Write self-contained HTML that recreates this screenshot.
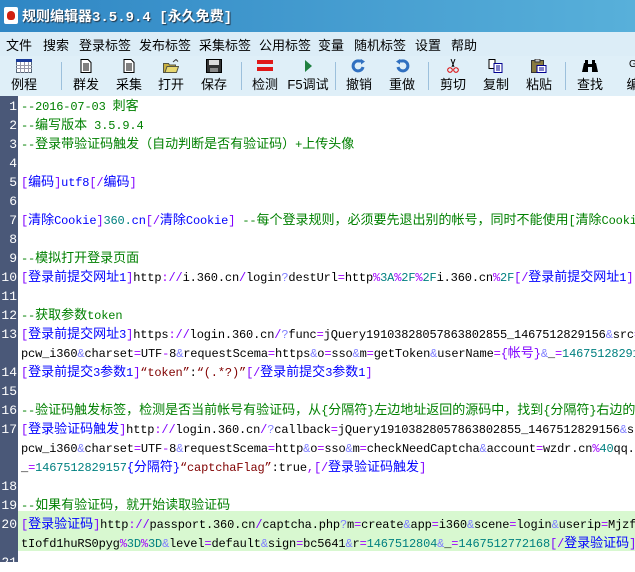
<!DOCTYPE html>
<html><head><meta charset="utf-8">
<style>
*{margin:0;padding:0;box-sizing:border-box}
body{width:635px;height:562px;overflow:hidden;background:#fff;font-family:"Liberation Sans","Noto Sans CJK SC",sans-serif;position:relative}
#title{position:absolute;left:0;top:0;width:635px;height:32px;background:linear-gradient(to right,#2f86c4,#58b0da);}
#title .ic{position:absolute;left:4px;top:7px;width:14px;height:17px;background:#fff;border-radius:2px}
#title .ic:after{content:"";position:absolute;left:3px;top:4px;width:8px;height:9px;background:#d02010;border-radius:4px 4px 3px 3px}
#title .tx{position:absolute;left:22px;top:6px;color:#fff;font-size:14px;font-weight:bold;text-shadow:1px 1px 1px #234;white-space:nowrap}
#title .tx span{font-family:"Liberation Mono",monospace;font-size:14px}
#menu{position:absolute;left:0;top:32px;width:635px;height:24px;background:#dcedf7}
#menu span{position:absolute;top:3px;font-size:13px;color:#000}
#tb{position:absolute;left:0;top:56px;width:635px;height:40px;background:#dfeff8}
.it{position:absolute;top:0;width:44px;text-align:center}
.it .lb{position:absolute;top:18px;left:0;width:100%;font-size:13px;color:#000;white-space:nowrap}
.it svg{position:absolute;top:3px;left:14px}
.sep{position:absolute;top:6px;width:1px;height:28px;background:#9cc0dc}
#gut{position:absolute;left:0;top:96px;width:18px;height:466px;background:#4a5878}
#ed{position:absolute;left:18px;top:96px;width:617px;height:466px;background:#fff;overflow:hidden}
.hl{position:absolute;left:0;top:415px;width:617px;height:40px;background:#d8f8d0}
.r{position:absolute;left:3px;height:19px;line-height:19px;white-space:nowrap;font-family:"Liberation Mono","Noto Sans CJK SC",monospace;font-size:12px;color:#000;letter-spacing:-0.15px;transform:translateY(2px)}
.r i{font-style:normal;font-family:"Noto Sans CJK SC",sans-serif;font-size:13px;line-height:12px;letter-spacing:0}
.n{position:absolute;left:0;width:17px;text-align:right;height:19px;line-height:19px;color:#fff;font-family:"Liberation Mono",monospace;font-size:13px;transform:translateY(1px)}
.c{color:#008000}.k{color:#8000ff}.t{color:#0000ff}.e{color:#a000ff}.a{color:#8080ff}.m{color:#008080}.s{color:#800000}
</style></head><body>
<div id="title"><div class="ic"></div><div class="tx">规则编辑器<span>3.5.9.4 [</span>永久免费<span>]</span></div></div>
<div id="menu">
<span style="left:6px">文件</span><span style="left:43px">搜索</span><span style="left:79px">登录标签</span><span style="left:139px">发布标签</span><span style="left:199px">采集标签</span><span style="left:259px">公用标签</span><span style="left:318px">变量</span><span style="left:354px">随机标签</span><span style="left:415px">设置</span><span style="left:451px">帮助</span>
</div>
<div id="tb">
<div class="it" style="left:2px"><svg width="16" height="14"><rect x="0.5" y="0.5" width="15" height="13" fill="#fff" stroke="#567"/><rect x="0" y="0" width="16" height="3" fill="#1a3a9a"/><path d="M0 6.5h16M0 9.5h16M4.5 3v11M8.5 3v11M12.5 3v11" stroke="#99a" /></svg><div class="lb">例程</div></div>
<svg style="position:absolute;left:46px;top:72px" width="7" height="4"><path d="M0 0h7L3.5 4z" fill="#000"/></svg>
<div class="sep" style="left:61px"></div>
<div class="it" style="left:64px"><svg width="16" height="14"><path d="M3 .5h7l3 3v10H3z" fill="#fff" stroke="#000"/><path d="M5 5h6M5 7h6M5 9h6M5 11h6" stroke="#000"/></svg><div class="lb">群发</div></div>
<div class="it" style="left:107px"><svg width="16" height="14"><path d="M3 .5h7l3 3v10H3z" fill="#fff" stroke="#000"/><path d="M5 5h6M5 7h6M5 9h6M5 11h6" stroke="#000"/></svg><div class="lb">采集</div></div>
<div class="it" style="left:149px"><svg width="16" height="14"><path d="M0.5 4.5h5l1 1.5h6v7.5H.5z" fill="#c8b040" stroke="#554"/><path d="M2 13.5l2-6h11.5l-2 6z" fill="#e8d870" stroke="#554"/><path d="M10 3l3-2.5 2 2" fill="none" stroke="#333"/></svg><div class="lb">打开</div></div>
<div class="it" style="left:192px"><svg width="16" height="14"><rect x=".5" y=".5" width="15" height="13" fill="#333" stroke="#000"/><rect x="3" y="1" width="10" height="5" fill="#ddd"/><rect x="4" y="9" width="8" height="4" fill="#888"/></svg><div class="lb">保存</div></div>
<div class="sep" style="left:241px"></div>
<div class="it" style="left:243px"><svg width="16" height="14"><rect x="0" y="1" width="16" height="4" fill="#e01818"/><rect x="0" y="8" width="16" height="4" fill="#e01818"/></svg><div class="lb">检测</div></div>
<div class="it" style="left:286px"><svg width="16" height="14"><path d="M5 1l7 6-7 6z" fill="#208040"/></svg><div class="lb">F5调试</div></div>
<div class="sep" style="left:335px"></div>
<div class="it" style="left:337px"><svg width="16" height="14"><path d="M12 8a5 5 0 1 1-4-6h3" fill="none" stroke="#3070c0" stroke-width="3"/><path d="M10 0l4 2.5-4 3z" fill="#3070c0"/></svg><div class="lb">撤销</div></div>
<div class="it" style="left:380px"><svg width="16" height="14"><path d="M4 8a5 5 0 1 0 4-6H5" fill="none" stroke="#3070c0" stroke-width="3"/><path d="M6 0L2 2.5l4 3z" fill="#3070c0"/></svg><div class="lb">重做</div></div>
<div class="sep" style="left:428px"></div>
<div class="it" style="left:431px"><svg width="16" height="14"><path d="M6 0l3 8M10 0L7 8" stroke="#000"/><circle cx="5" cy="11" r="2.3" fill="none" stroke="#d00"/><circle cx="11" cy="11" r="2.3" fill="none" stroke="#d00"/></svg><div class="lb">剪切</div></div>
<div class="it" style="left:474px"><svg width="16" height="14"><path d="M1 .5h6v9H1z" fill="#fff" stroke="#000"/><path d="M6 4.5h8v9H6z" fill="#fff" stroke="#000090"/><path d="M8 7h4M8 9h4M8 11h4" stroke="#000090"/></svg><div class="lb">复制</div></div>
<div class="it" style="left:517px"><svg width="16" height="14"><rect x=".5" y="1.5" width="12" height="12" fill="#887a40" stroke="#333"/><rect x="4" y="0" width="5" height="3" fill="#ccc" stroke="#333"/><path d="M6 6.5h9v7H6z" fill="#fff" stroke="#000090"/><path d="M8 9h5M8 11h5" stroke="#000090"/></svg><div class="lb">粘贴</div></div>
<div class="sep" style="left:565px"></div>
<div class="it" style="left:568px"><svg width="16" height="14"><path d="M2 4h4v9H0zM10 4h4l2 9h-6z" fill="#000"/><rect x="6" y="5" width="4" height="3" fill="#000"/><rect x="3" y="1" width="3" height="3" fill="#000"/><rect x="10" y="1" width="3" height="3" fill="#000"/></svg><div class="lb">查找</div></div>
<div class="it" style="left:611px"><div style="position:absolute;top:3px;left:18px;font-size:10px">G</div><div class="lb">编</div></div>
</div>
<div id="gut">
<div class="n" style="top:0">1</div><div class="n" style="top:19px">2</div><div class="n" style="top:38px">3</div><div class="n" style="top:57px">4</div><div class="n" style="top:76px">5</div><div class="n" style="top:95px">6</div><div class="n" style="top:114px">7</div><div class="n" style="top:133px">8</div><div class="n" style="top:152px">9</div><div class="n" style="top:171px">10</div><div class="n" style="top:190px">11</div><div class="n" style="top:209px">12</div><div class="n" style="top:228px">13</div><div class="n" style="top:266px">14</div><div class="n" style="top:285px">15</div><div class="n" style="top:304px">16</div><div class="n" style="top:323px">17</div><div class="n" style="top:380px">18</div><div class="n" style="top:399px">19</div><div class="n" style="top:418px">20</div><div class="n" style="top:456px">21</div>
</div>
<div id="ed">
<div class="hl"></div>
<div class="r c" style="top:0">--2016-07-03 <i>刺客</i></div>
<div class="r c" style="top:19px">--<i>编写版本</i> 3.5.9.4</div>
<div class="r c" style="top:38px">--<i>登录带验证码触发（自动判断是否有验证码）</i>+<i>上传头像</i></div>
<div class="r" style="top:76px"><span class="k">[</span><span class="t"><i>编码</i></span><span class="k">]</span><span class="t">utf8</span><span class="k">[/</span><span class="t"><i>编码</i></span><span class="k">]</span></div>
<div class="r" style="top:114px"><span class="k">[</span><span class="t"><i>清除</i>Cookie</span><span class="k">]</span><span class="m">360.</span><span class="t">cn</span><span class="k">[/</span><span class="t"><i>清除</i>Cookie</span><span class="k">]</span> <span class="c">--<i>每个登录规则，必须要先退出别的帐号，同时不能使用</i>[<i>清除</i>Cookie</span></div>
<div class="r c" style="top:152px">--<i>模拟打开登录页面</i></div>
<div class="r" style="top:171px"><span class="k">[</span><span class="t"><i>登录前提交网址</i>1</span><span class="k">]</span>http<span class="e">:</span><span class="k">//</span>i.360.cn<span class="k">/</span>login<span class="a">?</span>destUrl<span class="e">=</span>http<span class="m"><span class="e">%</span>3A<span class="e">%</span>2F<span class="e">%</span>2F</span>i.360.cn<span class="m"><span class="e">%</span>2F</span><span class="k">[/</span><span class="t"><i>登录前提交网址</i>1</span><span class="k">]</span></div>
<div class="r c" style="top:209px">--<i>获取参数</i>token</div>
<div class="r" style="top:228px"><span class="k">[</span><span class="t"><i>登录前提交网址</i>3</span><span class="k">]</span>https<span class="e">:</span><span class="k">//</span>login.360.cn<span class="k">/</span><span class="a">?</span>func<span class="e">=</span>jQuery19103828057863802855_1467512829156<span class="a">&amp;</span>src<span class="e">=</span></div>
<div class="r" style="top:247px">pcw_i360<span class="a">&amp;</span>charset<span class="e">=</span>UTF<span class="e">-</span>8<span class="a">&amp;</span>requestScema<span class="e">=</span>https<span class="a">&amp;</span>o<span class="e">=</span>sso<span class="a">&amp;</span>m<span class="e">=</span>getToken<span class="a">&amp;</span>userName<span class="e">=</span><span class="k">{<i>帐号</i>}</span><span class="a">&amp;</span>_<span class="e">=</span><span class="m">14675128291</span></div>
<div class="r" style="top:266px"><span class="k">[</span><span class="t"><i>登录前提交</i>3<i>参数</i>1</span><span class="k">]</span><span class="s">“token”</span>:<span class="s">“(.*?)”</span><span class="k">[/</span><span class="t"><i>登录前提交</i>3<i>参数</i>1</span><span class="k">]</span></div>
<div class="r c" style="top:304px">--<i>验证码触发标签，检测是否当前帐号有验证码，从</i>{<i>分隔符</i>}<i>左边地址返回的源码中，找到</i>{<i>分隔符</i>}<i>右边的</i></div>
<div class="r" style="top:323px"><span class="k">[</span><span class="t"><i>登录验证码触发</i></span><span class="k">]</span>http<span class="e">:</span><span class="k">//</span>login.360.cn<span class="k">/</span><span class="a">?</span>callback<span class="e">=</span>jQuery19103828057863802855_1467512829156<span class="a">&amp;</span>sr</div>
<div class="r" style="top:342px">pcw_i360<span class="a">&amp;</span>charset<span class="e">=</span>UTF<span class="e">-</span>8<span class="a">&amp;</span>requestScema<span class="e">=</span>http<span class="a">&amp;</span>o<span class="e">=</span>sso<span class="a">&amp;</span>m<span class="e">=</span>checkNeedCaptcha<span class="a">&amp;</span>account<span class="e">=</span>wzdr.cn<span class="m"><span class="e">%</span>40</span>qq.c</div>
<div class="r" style="top:361px">_<span class="e">=</span><span class="m">1467512829157</span><span class="t">{<i>分隔符</i>}</span><span class="s">“captchaFlag”</span>:true<span class="e">,</span><span class="k">[/</span><span class="t"><i>登录验证码触发</i></span><span class="k">]</span></div>
<div class="r c" style="top:399px">--<i>如果有验证码，就开始读取验证码</i></div>
<div class="r" style="top:418px"><span class="k">[</span><span class="t"><i>登录验证码</i></span><span class="k">]</span>http<span class="e">:</span><span class="k">//</span>passport.360.cn<span class="k">/</span>captcha.php<span class="a">?</span>m<span class="e">=</span>create<span class="a">&amp;</span>app<span class="e">=</span>i360<span class="a">&amp;</span>scene<span class="e">=</span>login<span class="a">&amp;</span>userip<span class="e">=</span>Mjzf0</div>
<div class="r" style="top:437px">tIofd1huRS0pyg<span class="m"><span class="e">%</span>3D<span class="e">%</span>3D</span><span class="a">&amp;</span>level<span class="e">=</span>default<span class="a">&amp;</span>sign<span class="e">=</span>bc5641<span class="a">&amp;</span>r<span class="e">=</span><span class="m">1467512804</span><span class="a">&amp;</span>_<span class="e">=</span><span class="m">1467512772168</span><span class="k">[/</span><span class="t"><i>登录验证码</i></span><span class="k">]</span></div>
</div>
</body></html>
